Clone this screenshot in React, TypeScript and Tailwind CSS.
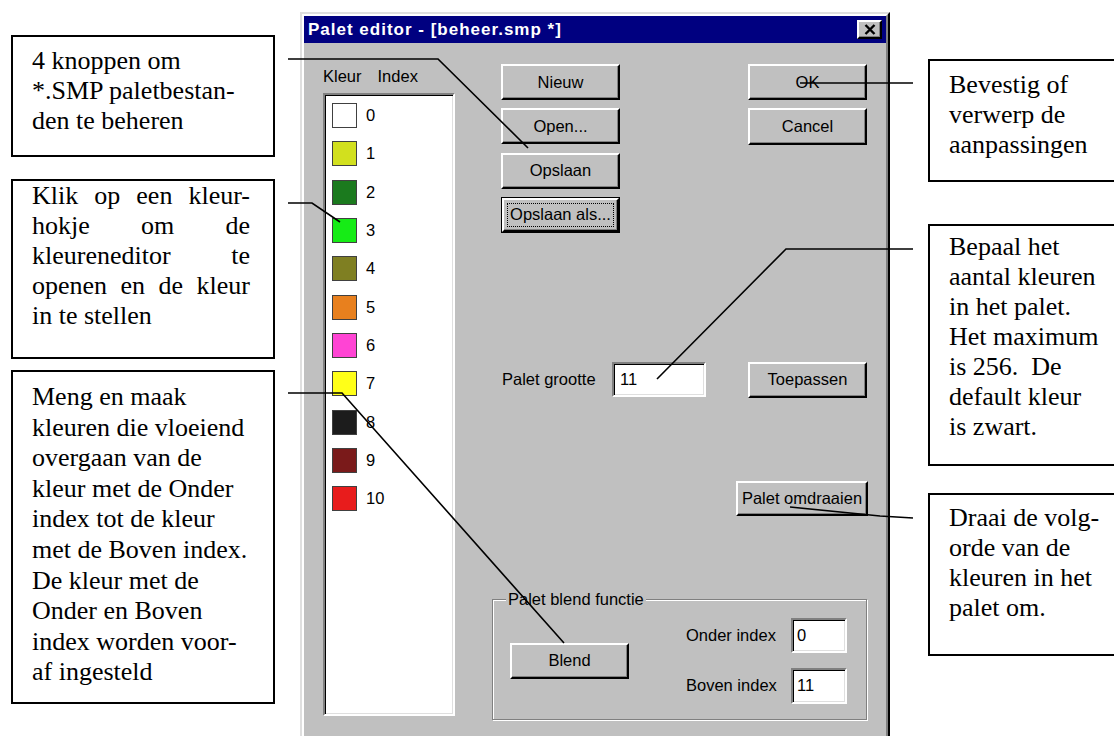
import React from "react";

const swatches = [
  "#ffffff",
  "#d2e01e",
  "#1b7a1e",
  "#16ec16",
  "#7f7f22",
  "#e8801e",
  "#ff44d4",
  "#ffff18",
  "#1c1c1c",
  "#7a1a1a",
  "#e81c1c",
];

// raised win98 bevel
const raised =
  "border-2 border-t-white border-l-white border-r-black border-b-black shadow-[inset_-1px_-1px_0_#808080]";
// sunken field
const sunken =
  "border-2 border-t-[#808080] border-l-[#808080] border-r-white border-b-white shadow-[inset_1px_1px_0_#000,inset_-1px_-1px_0_#dfdfdf]";

function Btn({
  children,
  className = "",
  focused = false,
}: {
  children: React.ReactNode;
  className?: string;
  focused?: boolean;
}) {
  if (focused) {
    return (
      <div className={`border-[1.5px] border-black ${className}`}>
        <div className={`${raised} h-full w-full p-[3px]`}>
          <div className="h-full w-full border border-dotted border-black flex items-center justify-center">
            {children}
          </div>
        </div>
      </div>
    );
  }
  return (
    <div className={`${raised} flex items-center justify-center ${className}`}>
      {children}
    </div>
  );
}

function Note({
  lines,
  className = "",
  justify = 0,
}: {
  lines: string[];
  className?: string;
  justify?: number;
}) {
  return (
    <div
      className={`border-2 border-black bg-white pl-[19px] font-['Liberation_Serif','Times_New_Roman',serif] text-[26px] text-black ${className}`}
    >
      {lines.map((l, i) =>
        i < justify ? (
          <div key={i} className="flex justify-between w-[218px]">
            {l.split(" ").map((w, j) => (
              <span key={j}>{w}</span>
            ))}
          </div>
        ) : (
          <div key={i} className="whitespace-pre">
            {l}
          </div>
        )
      )}
    </div>
  );
}

export default function App() {
  return (
    <div className="relative w-[1114px] h-[736px] overflow-hidden bg-white">
      <div className="flex items-start">
        {/* linker toelichtingen */}
        <div className="ml-[11px] w-[264px] flex flex-col shrink-0">
          <Note
            className="mt-[35px] h-[122px] pt-[9px] leading-[30px]"
            lines={["4 knoppen om", "*.SMP paletbestan-", "den te beheren"]}
          />
          <Note
            className="mt-[22px] h-[180px] pt-0 leading-[30px]"
            justify={4}
            lines={[
              "Klik op een kleur-",
              "hokje om de",
              "kleureneditor te",
              "openen en de kleur",
              "in te stellen",
            ]}
          />
          <Note
            className="mt-[11px] h-[334px] pt-[10px] leading-[30.6px]"
            lines={[
              "Meng en maak",
              "kleuren die vloeiend",
              "overgaan van de",
              "kleur met de Onder",
              "index tot de kleur",
              "met de Boven index.",
              "De kleur met de",
              "Onder en Boven",
              "index worden voor-",
              "af ingesteld",
            ]}
          />
        </div>

        {/* dialoog */}
        <div className="ml-[25px] mt-[12px] w-[590px] h-[760px] shrink-0 border-2 border-t-[#dfdfdf] border-l-[#dfdfdf] border-r-black border-b-black">
          <div className="h-full border-2 border-t-white border-l-white border-r-[#808080] border-b-[#808080] bg-[#c0c0c0] font-['Liberation_Sans',Arial,sans-serif] text-[16.5px] leading-[19px] text-black">
            <div className="h-[27px] bg-[#000080] flex items-center justify-between pl-[4px] pr-[4px]">
              <span className="text-white font-bold text-[17px] tracking-[1px]">
                Palet editor - [beheer.smp *]
              </span>
              <div className={`${raised} bg-[#c0c0c0] w-[25px] h-[19px] flex items-center justify-center`}>
                <svg width="12" height="11" viewBox="0 0 12 11">
                  <path d="M1.5 1 L10.5 10 M10.5 1 L1.5 10" stroke="#000" strokeWidth="2.4" />
                </svg>
              </div>
            </div>

            <div className="flex">
              {/* kleurenlijst */}
              <div className="pl-[19px] w-[151px] shrink-0">
                <div className="mt-[24px] h-[19px] flex">
                  <span>Kleur</span>
                  <span className="ml-[16px]">Index</span>
                </div>
                <div className={`${sunken} mt-[7px] h-[623px] w-[132px] bg-white pl-[7px] pt-[8px] flex flex-col gap-[13.33px]`}>
                  {swatches.map((c, i) => (
                    <div key={i} className="flex items-center h-[25px]">
                      <div
                        className="w-[25px] h-[25px] border-[1.5px] border-[#404040]"
                        style={{ backgroundColor: c }}
                      />
                      <span className="ml-[9px]">{i}</span>
                    </div>
                  ))}
                </div>
              </div>

              {/* bediening */}
              <div className="ml-[36px] w-[377px] flex flex-col">
                <div className="pt-[21px] pl-[10px] pr-[1px] flex justify-between">
                  <div className="w-[119px] flex flex-col gap-[8.33px]">
                    <Btn className="h-[36px]">Nieuw</Btn>
                    <Btn className="h-[36px]">Open...</Btn>
                    <Btn className="h-[36px]">Opslaan</Btn>
                    <Btn className="h-[36px]" focused>
                      Opslaan als...
                    </Btn>
                  </div>
                  <div className="w-[119px] flex flex-col gap-[8.33px]">
                    <Btn className="h-[36px]">OK</Btn>
                    <Btn className="h-[37px]">Cancel</Btn>
                  </div>
                </div>

                <div className="mt-[129px] h-[36px] flex items-center">
                  <span className="ml-[11px] w-[95px] whitespace-nowrap">Palet grootte</span>
                  <div className={`${sunken} ml-[15px] w-[94px] h-[35px] bg-white pl-[6px] flex items-center`}>
                    11
                  </div>
                  <Btn className="ml-auto mr-[1px] w-[119px] h-[36px]">Toepassen</Btn>
                </div>

                <Btn className="mt-[83px] self-end w-[132px] h-[35px]">Palet omdraaien</Btn>

                <div className="relative mt-[83px] ml-[1px] mr-[1px] h-[121px] border border-[#808080] shadow-[inset_1px_1px_0_#fff,1px_1px_0_#fff] flex">
                  <span className="absolute -top-[10px] left-[13px] px-[2px] bg-[#c0c0c0]">
                    Palet blend functie
                  </span>
                  <Btn className="ml-[17px] mt-[43px] w-[119px] h-[36px]">Blend</Btn>
                  <div className="ml-auto mr-[19px] mt-[18px] flex flex-col gap-[15px]">
                    <div className="flex items-center">
                      <span className="w-[105px]">Onder index</span>
                      <div className={`${sunken} w-[56px] h-[35px] bg-white pl-[4px] flex items-center`}>
                        0
                      </div>
                    </div>
                    <div className="flex items-center">
                      <span className="w-[105px]">Boven index</span>
                      <div className={`${sunken} w-[56px] h-[36px] bg-white pl-[4px] flex items-center`}>
                        11
                      </div>
                    </div>
                  </div>
                </div>
              </div>
            </div>
          </div>
        </div>

        {/* rechter toelichtingen */}
        <div className="ml-[38px] w-[240px] flex flex-col shrink-0">
          <Note
            className="mt-[59px] h-[123px] pt-[9px] leading-[30px]"
            lines={["Bevestig of", "verwerp de", "aanpassingen"]}
          />
          <Note
            className="mt-[42px] h-[242px] pt-[6px] leading-[30px]"
            lines={[
              "Bepaal het",
              "aantal kleuren",
              "in het palet.",
              "Het maximum",
              "is 256.  De",
              "default kleur",
              "is zwart.",
            ]}
          />
          <Note
            className="mt-[27px] h-[163px] pt-[8px] leading-[30px]"
            lines={["Draai de volg-", "orde van de", "kleuren in het", "palet om."]}
          />
        </div>
      </div>

      {/* verbindingslijnen */}
      <svg
        className="absolute inset-0 pointer-events-none"
        width="1114"
        height="736"
        viewBox="0 0 1114 736"
      >
        <g fill="none" stroke="#000" strokeWidth="1.6">
          <polyline points="288,59 438,59 528,148" />
          <polyline points="288,203 312,203 340,222" />
          <polyline points="288,393 342,393 564,643" />
          <polyline points="913,83 800,83" />
          <polyline points="913,249 786,249 657,379" />
          <polyline points="913,518 880,516 790,507" />
        </g>
      </svg>
    </div>
  );
}
